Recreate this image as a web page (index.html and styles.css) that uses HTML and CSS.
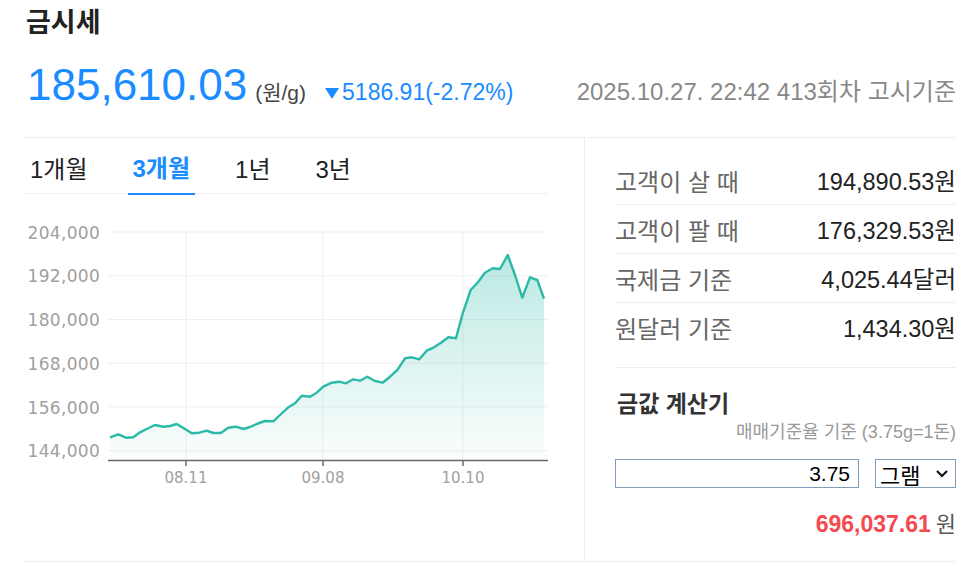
FILE: index.html
```html
<!DOCTYPE html>
<html lang="ko">
<head>
<meta charset="utf-8">
<title>금시세</title>
<link rel="stylesheet" href="styles.css">
</head>
<body>
<div class="wrap">
  <header class="head">
    <h1 class="title">금시세</h1>
    <div class="price-row">
      <div class="price">
        <span class="now">185,610.03</span>
        <span class="unit">(원/g)</span>
        <span class="chg"><svg class="tri" width="14" height="11" viewBox="0 0 14 11"><path d="M0 0H14L7 11Z" fill="#1a8cff"/></svg>5186.91(-2.72%)</span>
      </div>
      <div class="date">2025.10.27. 22:42 413회차 고시기준</div>
    </div>
  </header>

  <section class="board">
    <div class="left">
      <nav class="tabs">
        <span class="tab">1개월</span>
        <span class="tab active">3개월</span>
        <span class="tab">1년</span>
        <span class="tab">3년</span>
      </nav>
      <svg class="chart" width="525" height="300" viewBox="23 194 525 300">
        <defs>
          <linearGradient id="fill" x1="0" y1="0" x2="0" y2="1">
            <stop offset="0" stop-color="#2bb9a8" stop-opacity="0.32"/>
            <stop offset="1" stop-color="#2bb9a8" stop-opacity="0.02"/>
          </linearGradient>
        </defs>
        <g class="grid">
          <line x1="108" y1="232" x2="548" y2="232"/>
          <line x1="108" y1="275.7" x2="548" y2="275.7"/>
          <line x1="108" y1="319.5" x2="548" y2="319.5"/>
          <line x1="108" y1="363.2" x2="548" y2="363.2"/>
          <line x1="108" y1="407" x2="548" y2="407"/>
          <line x1="108" y1="450.7" x2="548" y2="450.7"/>
          <line x1="186" y1="232" x2="186" y2="460"/>
          <line x1="323" y1="232" x2="323" y2="460"/>
          <line x1="463" y1="232" x2="463" y2="460"/>
        </g>
        <g class="ylab">
          <text x="100" y="238.5">204,000</text>
          <text x="100" y="282.2">192,000</text>
          <text x="100" y="326">180,000</text>
          <text x="100" y="369.7">168,000</text>
          <text x="100" y="413.5">156,000</text>
          <text x="100" y="457.2">144,000</text>
        </g>
        <polygon fill="url(#fill)" points="110,437.3 118.3,434.3 126,437.7 133.3,437.3 140,432.3 146.7,429 155,425 163.3,426.7 170,426 176.7,424 185,429 191.7,433.3 199.3,432.7 206.7,430.7 213.3,433 220.7,433 228.3,427.7 236,426.7 243.3,429 250,427 256.7,424 265,421 273.3,421.3 280,415 288.3,407.3 295,403.3 301.7,395.7 310,396.7 316.7,392.7 323.3,386.7 331.7,382.7 339.3,381.7 346,383.3 353.3,379.3 360,380.7 367.3,376.7 375,381 382.7,382.7 390,376.7 397.3,370 405,358.3 411.7,357.3 419.3,359.3 426.7,350.7 434,347.3 441.7,342.3 448.3,337.3 456,338.3 462.7,313.3 470.7,290 478.3,281.7 485,272.7 492.7,268.3 500,269 507.7,255 515,275 522.3,297.7 530,277.3 537.3,280 544,298.7 544,460 110,460"/>
        <polyline class="line" points="110,437.3 118.3,434.3 126,437.7 133.3,437.3 140,432.3 146.7,429 155,425 163.3,426.7 170,426 176.7,424 185,429 191.7,433.3 199.3,432.7 206.7,430.7 213.3,433 220.7,433 228.3,427.7 236,426.7 243.3,429 250,427 256.7,424 265,421 273.3,421.3 280,415 288.3,407.3 295,403.3 301.7,395.7 310,396.7 316.7,392.7 323.3,386.7 331.7,382.7 339.3,381.7 346,383.3 353.3,379.3 360,380.7 367.3,376.7 375,381 382.7,382.7 390,376.7 397.3,370 405,358.3 411.7,357.3 419.3,359.3 426.7,350.7 434,347.3 441.7,342.3 448.3,337.3 456,338.3 462.7,313.3 470.7,290 478.3,281.7 485,272.7 492.7,268.3 500,269 507.7,255 515,275 522.3,297.7 530,277.3 537.3,280 544,298.7"/>
        <g class="axis">
          <line x1="108" y1="460.5" x2="548" y2="460.5"/>
          <line x1="186" y1="460" x2="186" y2="466"/>
          <line x1="323" y1="460" x2="323" y2="466"/>
          <line x1="463" y1="460" x2="463" y2="466"/>
        </g>
        <g class="xlab">
          <text x="186" y="483">08.11</text>
          <text x="323" y="483">09.08</text>
          <text x="463" y="483">10.10</text>
        </g>
      </svg>
    </div>

    <div class="right">
      <div class="row"><span class="lbl">고객이 살 때</span><span class="val">194,890.53원</span></div>
      <div class="row"><span class="lbl">고객이 팔 때</span><span class="val">176,329.53원</span></div>
      <div class="row"><span class="lbl">국제금 기준</span><span class="val">4,025.44달러</span></div>
      <div class="row last"><span class="lbl">원달러 기준</span><span class="val">1,434.30원</span></div>

      <div class="calc">
        <h2 class="calc-title">금값 계산기</h2>
        <p class="calc-note">매매기준율 기준 (3.75g=1돈)</p>
        <div class="calc-inputs">
          <input class="amount" type="text" value="3.75">
          <div class="unit-select"><span>그램</span><svg width="14" height="9" viewBox="0 0 14 9"><path d="M2 2L7 7L12 2" fill="none" stroke="#111" stroke-width="2.2"/></svg></div>
        </div>
        <div class="result"><span class="sum">696,037.61</span><span class="won">원</span></div>
      </div>
    </div>
  </section>
</div>
</body>
</html>
```

FILE: styles.css
```css
* { box-sizing: border-box; }
html, body { margin: 0; padding: 0; background: #fff; }
body {
  font-family: "Liberation Sans", "Noto Sans CJK KR", sans-serif;
  color: #222;
}
.wrap { width: 972px; padding: 0 16px 0 23px; }

.head { padding-top: 4px; }
.title {
  margin: 0 0 0 3px;
  font-size: 27px;
  font-weight: 700;
  line-height: 38px;
  color: #222;
}
.price-row {
  display: flex;
  justify-content: space-between;
  align-items: baseline;
  margin-top: 18px;
  height: 77px;
}
.price { display: flex; align-items: baseline; padding-left: 4px; }
.now {
  font-size: 44px;
  line-height: 50px;
  color: #1a8cff;
}
.unit { font-size: 21px; color: #444; margin-left: 8px; }
.chg { font-size: 23px; color: #1a8cff; margin-left: 19px; }
.tri { margin-right: 3px; vertical-align: 1px; }
.date { font-size: 24px; color: #888; }

.board {
  display: flex;
  border-top: 1px solid #eee;
  border-bottom: 1px solid #eee;
  height: 425px;
}
.left {
  width: 562px;
  border-right: 1px solid #eee;
  padding-right: 37px;
}
.tabs {
  display: flex;
  gap: 35px;
  height: 56px;
  padding-left: 2px;
  border-bottom: 1px solid #f0f0f0;
}
.tab {
  padding: 8px 5px 0;
  font-size: 24px;
  line-height: 48px;
  color: #222;
}
.tab.active {
  color: #1a8cff;
  font-weight: 700;
  border-bottom: 2px solid #1a8cff;
  line-height: 46px;
  margin-bottom: -1px;
  height: 57px;
}
.chart { display: block; }
.grid line { stroke: #efefef; stroke-width: 1; }
.ylab text {
  font-family: "DejaVu Sans", sans-serif;
  font-size: 17px;
  letter-spacing: 0.3px;
  fill: #a0a0a0;
  text-anchor: end;
}
.xlab text {
  font-family: "DejaVu Sans", sans-serif;
  font-size: 15px;
  fill: #a0a0a0;
  text-anchor: middle;
}
.axis line { stroke: #6a6a6a; stroke-width: 1.5; }
.line { fill: none; stroke: #2bb9a8; stroke-width: 2.4; stroke-linejoin: round; }

.right { flex: 1; padding: 18px 0 0 30px; }
.row {
  display: flex;
  justify-content: space-between;
  align-items: center;
  height: 49px;
  border-bottom: 1px solid #eee;
  font-size: 23.5px;
}
.row.last { height: 65px; padding-bottom: 16px; }
.lbl { color: #666; font-size: 24px; }
.val { color: #222; }

.calc-title {
  margin: 22px 0 0 2px;
  font-size: 23px;
  font-weight: 700;
  line-height: 28px;
  color: #333;
}
.calc-note {
  margin: 3px 0 0;
  text-align: right;
  font-size: 18px;
  line-height: 22px;
  color: #999;
}
.calc-inputs {
  display: flex;
  justify-content: space-between;
  margin-top: 16px;
}
.amount {
  width: 244px;
  height: 29px;
  border: 1px solid #7f9db9;
  padding: 0 8px 0 4px;
  text-align: right;
  font-family: "Liberation Sans", sans-serif;
  font-size: 21px;
  color: #000;
  outline: none;
}
.unit-select {
  width: 81px;
  height: 29px;
  border: 1px solid #7f9db9;
  display: flex;
  align-items: center;
  justify-content: space-between;
  padding: 0 6px 0 4px;
  font-size: 22px;
  color: #000;
}
.result {
  margin-top: 22px;
  text-align: right;
  line-height: 28px;
}
.sum { font-size: 23px; font-weight: 700; color: #f24a4f; }
.won { font-size: 22px; color: #555; margin-left: 5px; }
```
